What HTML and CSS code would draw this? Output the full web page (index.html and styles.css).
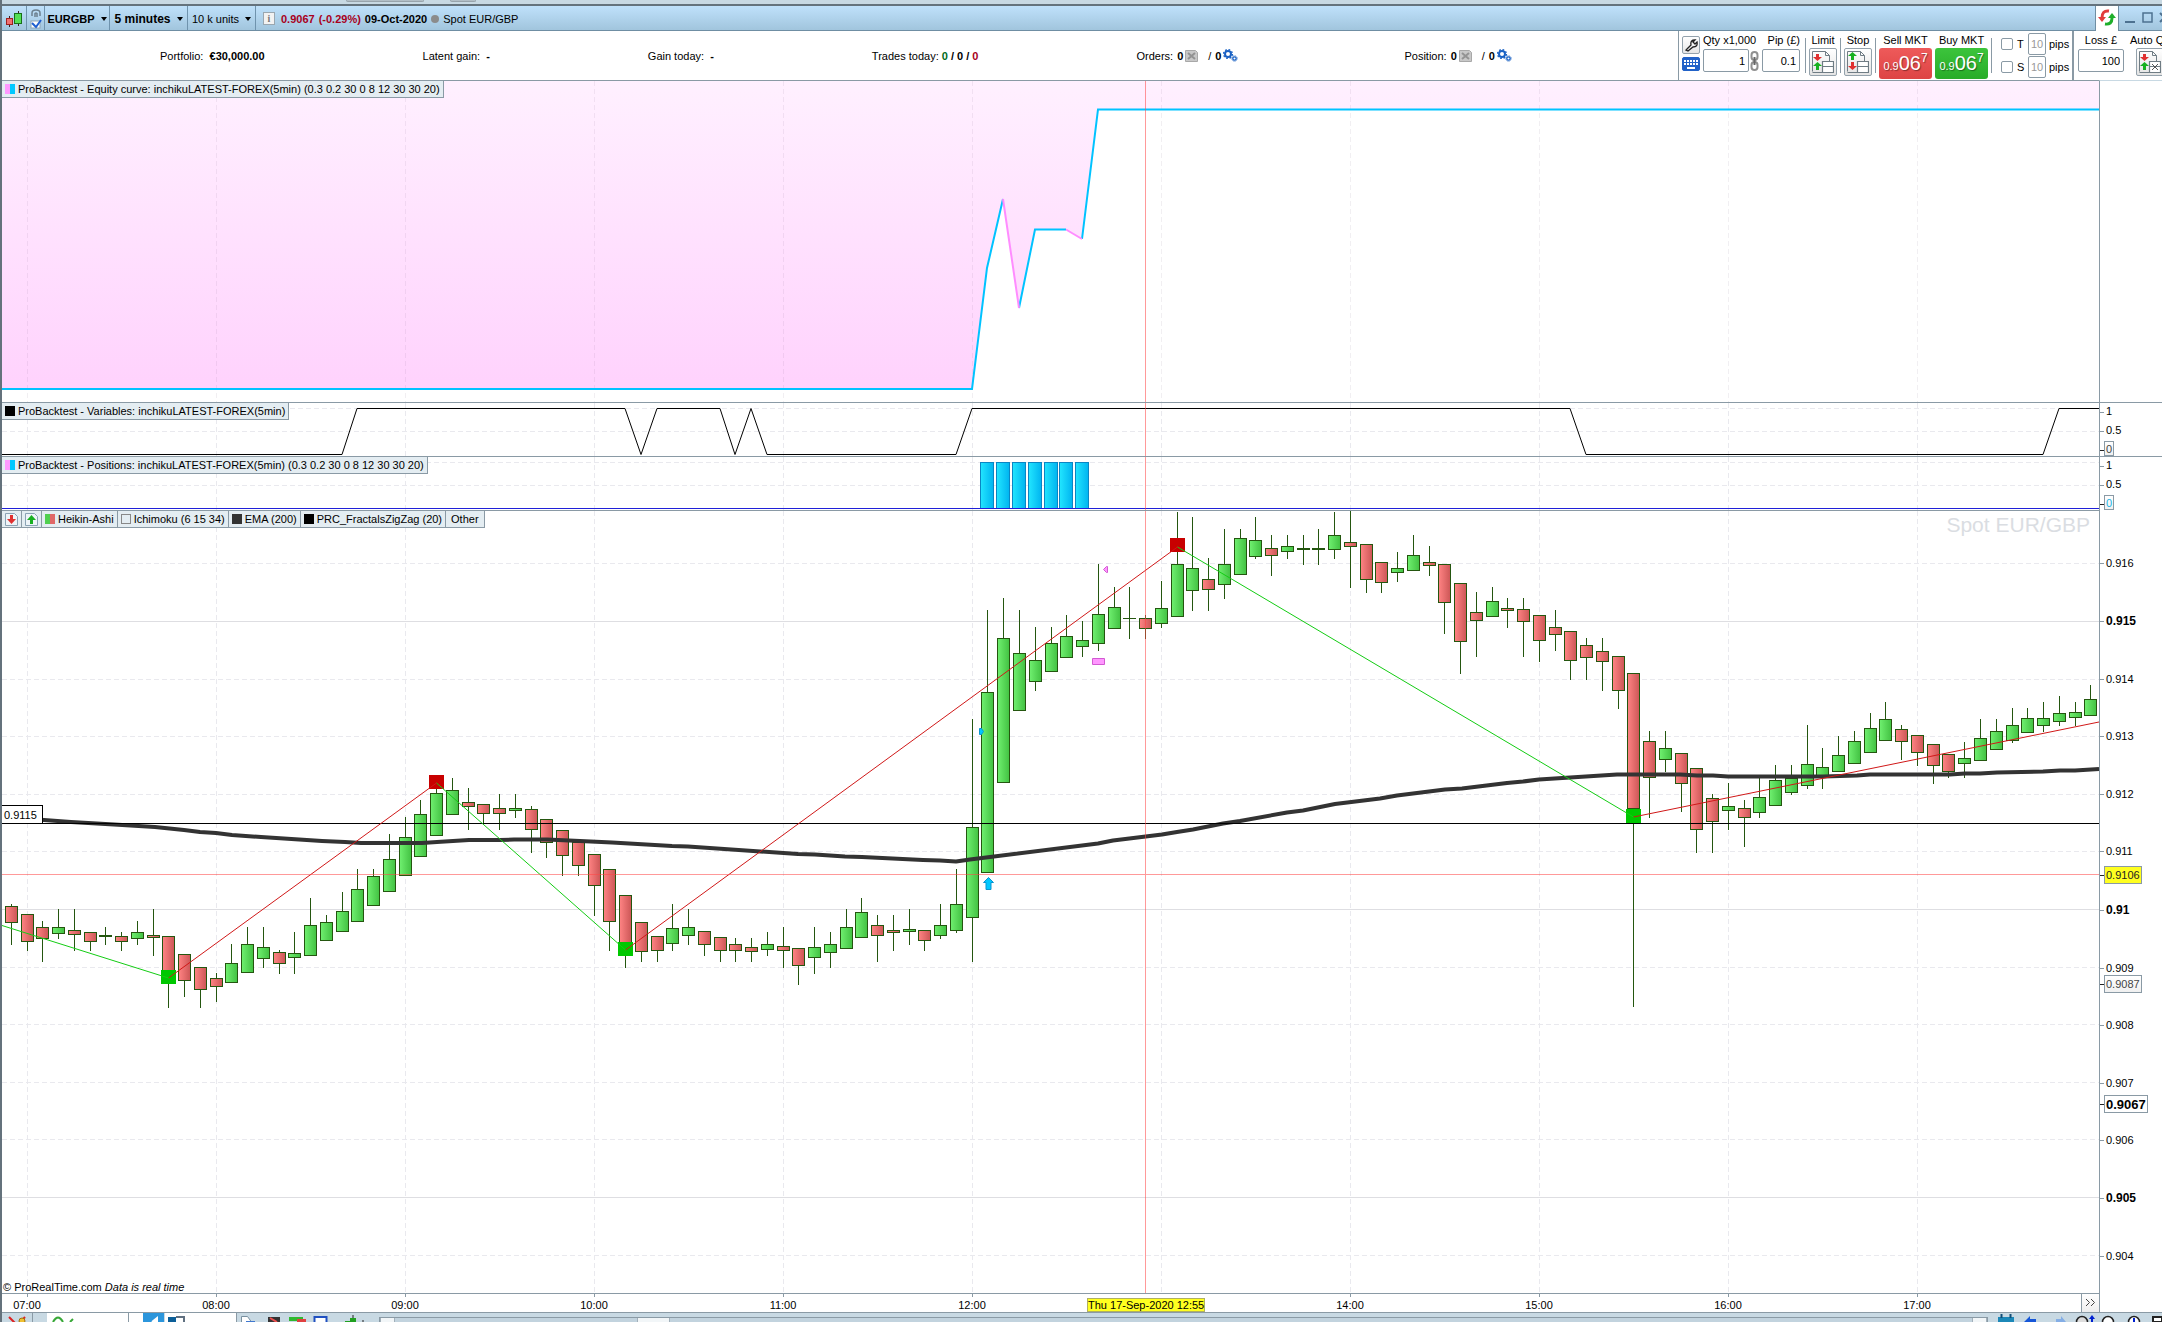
FILE: index.html
```html
<!DOCTYPE html>
<html lang="en">
<head>
<meta charset="utf-8">
<title>EURGBP 5 minutes</title>
<link rel="stylesheet" href="styles.css">
</head>
<body>
<svg class="defs" width="0" height="0" aria-hidden="true">
  <defs>
    <linearGradient id="up"><stop offset="0" stop-color="#70f070"/><stop offset="1" stop-color="#42c142"/></linearGradient>
    <linearGradient id="down"><stop offset="0" stop-color="#ff8484"/><stop offset="1" stop-color="#cc5656"/></linearGradient>
    <linearGradient id="long"><stop offset="0" stop-color="#22e6ff"/><stop offset="1" stop-color="#00b4f0"/></linearGradient>
    <linearGradient id="equityFill" x1="0" y1="81" x2="0" y2="390" gradientUnits="userSpaceOnUse"><stop offset="0" stop-color="#fff0ff"/><stop offset="1" stop-color="#ffd2fd"/></linearGradient>
    <symbol id="gears" viewBox="0 0 15 13">
      <circle cx="5" cy="5" r="3" fill="none" stroke="#1a62c4" stroke-width="2"/>
      <circle cx="5" cy="5" r="4.4" fill="none" stroke="#1a62c4" stroke-width="1.4" stroke-dasharray="1.7 1.75"/>
      <circle cx="11.500" cy="9.500" r="1.700" fill="none" stroke="#1a62c4" stroke-width="1.300"/>
      <circle cx="11.500" cy="9.500" r="2.700" fill="none" stroke="#1a62c4" stroke-dasharray="1 1.100"/>
    </symbol>
    <symbol id="cancel" viewBox="0 0 13 12">
      <path d="M.5.5h10l2 2v9H.5z" fill="#c8c8c8" stroke="#a8a8a8"/>
      <path d="M3 3l7 6M10 3L3 9" stroke="#939393" stroke-width="2"/>
    </symbol>
    <symbol id="sheet" viewBox="0 0 22 22">
      <path d="M.5 20.500V.500h13l4 4v6M.500 21.500h10M13.500.500v4h4" fill="none" stroke="#6f7c84"/>
      <path d="M10.500 10.500h11v5h-11zM10.500 15.500h11v6h-11z" fill="#fff" stroke="#6f7c84" stroke-width="1.200"/>
    </symbol>
  </defs>
</svg>
<div class="window">
  <div class="desktop-edge"><i class="tab wide"></i><i class="tab"></i></div>

  <header class="titlebar">
    <button class="cell candle-btn" aria-label="Chart type"><svg width="16" height="18"><path d="M3.500 6v11M12.500 1v15" stroke="#3a2020"/><rect x=".5" y="8.500" width="6" height="6" fill="#f07070" stroke="#a02020"/><rect x="8.500" y="3.500" width="7" height="10" fill="#55e055" stroke="#187018"/></svg></button>
    <button class="cell link-btn" aria-label="Link list"><svg width="12" height="20"><path d="M2 7V4q0-3 4-3t4 3v3M5 8V4.500q1-1 2 0V8" fill="none" stroke="#6c7f8d" stroke-width="1.500"/><rect x="1" y="12" width="9" height="7" fill="#fff" stroke="#8fa5b5"/><path d="M2 14l4 4 5-7" fill="none" stroke="#1f5fd0" stroke-width="2"/></svg></button>
    <button class="cell symbol">EURGBP<i class="caret"></i></button>
    <button class="cell period">5 minutes<i class="caret"></i></button>
    <button class="cell units">10 k units<i class="caret"></i></button>
    <div class="quote"><span class="info">i</span><b class="loss">0.9067</b><b class="loss">(-0.29%)</b><b>09-Oct-2020</b><i class="dot"></i><span>Spot EUR/GBP</span></div>
    <div class="win-buttons">
      <button class="sync" aria-label="Refresh"><svg width="18" height="18"><path d="M11 2Q4 1 4 9" fill="none" stroke="#e23c3c" stroke-width="3"/><path d="M0 8h8l-4 5z" fill="#e23c3c"/><path d="M7 15q7 1 7-6" fill="none" stroke="#1eae2a" stroke-width="3"/><path d="M10 9h8l-4-5z" fill="#1eae2a"/></svg></button>
      <button aria-label="Minimise"><svg width="11" height="12"><path d="M0 10h10" stroke="#4d7190" stroke-width="2"/></svg></button>
      <button aria-label="Maximise"><svg width="11" height="12"><rect x="1" y="1" width="9" height="9" fill="none" stroke="#4d7190" stroke-width="1.500"/></svg></button>
      <button aria-label="Close"><svg width="11" height="12"><path d="M1 1l9 9M10 1l-9 9" stroke="#4d7190" stroke-width="2"/></svg></button>
    </div>
  </header>

  <section class="account">
    <div class="stats">
      <span>Portfolio: &nbsp;<b>€30,000.00</b></span>
      <span>Latent gain: &nbsp;<b>-</b></span>
      <span>Gain today: &nbsp;<b>-</b></span>
      <span>Trades today: <b class="win">0</b> <b>/ 0 /</b> <b class="loss">0</b></span>
      <span class="orders">Orders: <b>0</b> <svg width="13" height="12"><use href="#cancel"/></svg> <span class="slash">/</span> <b>0</b><svg width="15" height="13"><use href="#gears"/></svg></span>
      <span class="orders">Position: <b>0</b> <svg width="13" height="12"><use href="#cancel"/></svg> <span class="slash">/</span> <b>0</b><svg width="15" height="13"><use href="#gears"/></svg></span>
    </div>
    <form class="ticket">
      <div class="tools">
        <button type="button" class="tool" aria-label="Settings"><svg width="14" height="14"><path d="M2 12l5-5M7 7q-1-5 4-5L9 4l2 2 2-2q1 5-4 5l-5 4-2-1z" fill="none" stroke="#222" stroke-width="1.300"/></svg></button>
        <button type="button" class="tool keys" aria-label="Keyboard"><svg width="16" height="12"><path d="M1 3h14M1 6h14" stroke="#fff" stroke-width="2" stroke-dasharray="2 1"/><path d="M4 10h8" stroke="#fff" stroke-width="2"/></svg></button>
      </div>
      <label class="field qty">Qty x1,000<input value="1"></label>
      <svg class="chain" width="9" height="20"><rect x="1.500" y="1" width="6" height="8" rx="3" fill="none" stroke="#909090" stroke-width="2"/><rect x="1.500" y="11" width="6" height="8" rx="3" fill="none" stroke="#909090" stroke-width="2"/><path d="M4.500 6v8" stroke="#666" stroke-width="2"/></svg>
      <label class="field pip">Pip (£)<input value="0.1"></label>
      <i class="sep"></i>
      <div class="order"><span>Limit</span><button type="button" class="order-btn" aria-label="Limit order"><svg width="22" height="22"><use href="#sheet"/><path d="M4 3h3v3h3l-4.500 4L1 6h3z" fill="#e03030"/><path d="M4 19h3v-4h3l-4.500-4L1 15h3z" fill="#18b020"/></svg></button></div>
      <i class="sep"></i>
      <div class="order"><span>Stop</span><button type="button" class="order-btn" aria-label="Stop order"><svg width="22" height="22"><use href="#sheet"/><path d="M4 9h3V5h3L5.500 1 1 5h3z" fill="#18b020"/><path d="M4 11h3v4h3l-4.500 4L1 15h3z" fill="#e03030"/></svg></button></div>
      <i class="sep"></i>
      <div class="order"><span>Sell MKT</span><button type="button" class="market sell"><small>0.9</small>06<sup>7</sup></button></div>
      <div class="order"><span>Buy MKT</span><button type="button" class="market buy"><small>0.9</small>06<sup>7</sup></button></div>
      <i class="sep"></i>
      <div class="legs">
        <div><label><input type="checkbox">T</label><input class="pips" value="10" aria-label="Target pips">pips</div>
        <div><label><input type="checkbox">S</label><input class="pips" value="10" aria-label="Stop pips">pips</div>
      </div>
    </form>
    <div class="autoqty">
      <label class="field loss-field">Loss £<input value="100"></label>
      <div class="order auto"><span>Auto Q</span><button type="button" class="order-btn" aria-label="Automatic quantity"><svg width="22" height="22"><use href="#sheet"/><path d="M4 3h3v3h3l-4.500 4L1 6h3z" fill="#e03030"/><path d="M4 19h3v-4h3l-4.500-4L1 15h3z" fill="#18b020"/><path d="M13 13l6 6M19 13l-6 6" stroke="#555"/></svg></button></div>
    </div>
  </section>

  <section class="panel equity">
    <div class="plot">
      <svg class="chart" id="equity" viewBox="2 81 2097 321" preserveAspectRatio="none">
        <path fill="url(#equityFill)" d="M2 81V389H972L987 268 1003 199 1019 308 1035 229H1066L1082 239 1098 109H2099V81z"/>
        <g class="hours"></g>
        <path class="gain-line" d="M2 389H972L987 268 1003 199M1019 308L1035 229.500H1066M1082 239L1098 109.500H2099"/>
        <path class="loss-line" d="M1003 199L1019 308M1066 229.500L1082 239"/>
        <path class="cross" d="M1145.500 81V402"/>
      </svg>
      <div class="legend"><span><i class="swatch duo"></i>ProBacktest - Equity curve: inchikuLATEST-FOREX(5min) (0.3 0.2 30 0 8 12 30 30 20)</span></div>
    </div>
    <div class="axis"></div>
  </section>

  <section class="panel small">
    <div class="plot">
      <svg class="chart" id="variables" viewBox="2 403 2097 53" preserveAspectRatio="none">
        <g class="hours"></g>
        <path class="dash" d="M2 408.500H2099M2 431.500H2099"/>
        <path class="var-line" d="M2 454.500H342L357 408.500H625L641 454.500 657 408.500H720L735 454.500 751 408.500 767 454.500H956L972 408.500H1570L1586 454.500H2043L2059 408.500H2099"/>
        <path class="cross" d="M1145.500 403V456"/>
      </svg>
      <div class="legend"><span><i class="swatch black"></i>ProBacktest - Variables: inchikuLATEST-FOREX(5min)</span></div>
    </div>
    <div class="axis steps"><span>1</span><span>0.5</span><span class="tag">0</span></div>
  </section>

  <section class="panel small">
    <div class="plot">
      <svg class="chart" id="positions" viewBox="2 457 2097 53" preserveAspectRatio="none">
        <g class="hours"></g>
        <path class="dash" d="M2 462.500H2099M2 485.500H2099"/>
        <g id="bars"></g>
        <path class="zero" d="M2 508.500H2099"/>
        <path class="cross" d="M1145.500 457V510"/>
      </svg>
      <div class="legend"><span><i class="swatch duo"></i>ProBacktest - Positions: inchikuLATEST-FOREX(5min) (0.3 0.2 30 0 8 12 30 30 20)</span></div>
    </div>
    <div class="axis steps"><span>1</span><span>0.5</span><span class="tag blue">0</span></div>
  </section>

  <section class="panel price">
    <div class="plot">
      <svg class="chart" id="price" viewBox="2 511 2097 782" preserveAspectRatio="none">
        <g class="hours"></g>
        <g id="levels"></g>
        <g id="candles"></g>
        <polyline class="ema" points="2,817 44,820 71,822 114,824.500 155,827 184,830 200,832 216,833 232,835 261,837 322,841 345,842 361,843 422,843 437,842 453,841 469,840 500,840 514,839.500 547,839.500 580,841 612,842.500 672,846 688,846.500 798,854 815,854.500 845,856.500 862,857 923,860 940,860.500 956,861.500 970,859.500 1098,843.500 1113,840.500 1162,834.500 1177,832 1193,829.500 1223,823.500 1240,821 1287,812.500 1303,810.500 1335,804 1380,798.500 1397,795.500 1445,789.500 1462,788.500 1507,783 1523,781.500 1539,779.500 1617,774.500 1680,774.500 1697,775.500 1713,775.500 1728,776.500 1823,776.500 1857,775.500 1870,774.500 1950,774.500 1965,773.500 1980,773.500 1997,772.500 2043,771.500 2060,770.500 2075,770.500 2099,769"/>
        <path class="level" d="M2 823.500H2099"/>
        <path class="mark-low" d="M161 970h15v14h-15zM618 942h15v14h-15zM1626 809h15v14h-15z"/>
        <path class="mark-high" d="M429 775h15v14h-15zM1170 538h15v14h-15z"/>
        <path class="zig-up" d="M168.500 978L436.500 783M625.500 950L1177.500 547M1633.500 817L2099 722"/>
        <path class="zig-down" d="M2 925.500L168.500 978M436.500 783L625.500 950M1177.500 547L1633.500 817"/>
        <path class="buy-arrow" d="M988.500 877.500l5 5h-2.500v7h-5v-7h-2.500z"/>
        <path class="buy-arrow" d="M979.500 728.500v6h2l2-3-2-3z"/>
        <path class="sell-mark" d="M1107.500 566.500v6h-1l-3-3 3-3zM1092.500 658.500h12v6h-12z"/>
        <path class="cross" d="M2 874.500H2099M1145.500 511V1293"/>
      </svg>
      <div class="legend">
        <button class="sheet-btn" aria-label="Sell"><svg width="13" height="13"><path d="M.5.5h9l3 3v9H.5z" fill="#eef4f8" stroke="#8ba3b5"/><path d="M6.500 2v4" stroke="#e03030" stroke-width="3"/><path d="M2 6h9l-4.500 5z" fill="#e03030"/></svg></button>
        <button class="sheet-btn" aria-label="Buy"><svg width="13" height="13"><path d="M.5.5h9l3 3v9H.5z" fill="#eef4f8" stroke="#8ba3b5"/><path d="M6.500 7v4" stroke="#18b020" stroke-width="3"/><path d="M2 7h9L6.500 2z" fill="#18b020"/></svg></button>
        <span><i class="swatch heikin"></i>Heikin-Ashi</span>
        <span><i class="swatch hollow"></i>Ichimoku (6 15 34)</span>
        <span><i class="swatch dark"></i>EMA (200)</span>
        <span><i class="swatch black"></i>PRC_FractalsZigZag (20)</span>
        <span class="other">Other</span>
      </div>
      <span class="watermark">Spot EUR/GBP</span>
      <span class="level-label">0.9115</span>
      <span class="copyright">© ProRealTime.com <em>Data is real time</em></span>
    </div>
    <div class="axis" id="prices"></div>
  </section>

  <section class="panel timeline">
    <div class="plot" id="times"><button class="more" aria-label="Scroll to latest"><svg width="11" height="9"><path d="M1 1l3.500 3.500L1 8M6 1l3.500 3.500L6 8" fill="none" stroke="#444"/></svg></button></div>
    <div class="axis"></div>
  </section>

  <footer class="toolbar">
    <svg class="icons-left" width="245" height="9"><path d="M7 4l10 10M14 14l9-10" stroke="#d22" stroke-width="2"/><circle cx="20" cy="8" r="3" fill="#f0c030" stroke="#a07010"/><path d="M30.500 0v9" stroke="#8a9aa5"/><path d="M45 0h96v9H45zM163 0h71v9H163z" fill="#fff"/><path d="M126.500 0v9M234.500 0v9" stroke="#8a9aa5"/><path d="M51 9q5-9 10 0M68 9l3-3" fill="none" stroke="#38a838" stroke-width="2"/><path d="M141 0h21v9h-21z" fill="#2c96dc"/><path d="M150 9l5-4v4" stroke="#fff" stroke-width="2" fill="#fff"/><path d="M166 9V4h8v5" fill="#0c5f98"/><path d="M174 4h8v5" fill="none" stroke="#607080" stroke-width="2"/></svg>
    <svg class="icons-mid" width="124" height="9"><path d="M.500 9V3.500h6l4 5.500" fill="#fff" stroke="#7890a0"/><path d="M5 8h9v1H5z" fill="#4078d0"/><path d="M27 4h12v5H27z" fill="#333"/><path d="M29 5l7 4" stroke="#f05050" stroke-width="2"/><path d="M48 4h14v4H48z" fill="#30b830"/><path d="M56 6h9v3h-9z" fill="#e04040"/><path d="M73.500 9V4h12v5" fill="#fff" stroke="#2050c0" stroke-width="2"/><path d="M109 5h6v4h-6zM104 8h5v1h-5z" fill="#20a020"/><path d="M112 2v3M121 8h2" stroke="#222"/></svg>
    <div class="scroll"><i class="end"></i><i class="thumb"></i><i class="end"></i></div>
    <svg class="icons-right" width="164" height="9"><path d="M0 4h16v5H0z" fill="#1c88b8"/><path d="M3.500 1v4M12.500 1v4" stroke="#124f78" stroke-width="2"/><path d="M26 9l6-6v3h6v3z" fill="#1556d8"/><path d="M68 9l-5-6v3h-5v3z" fill="#84aee6"/><circle cx="84" cy="9" r="5.500" fill="#ddd" stroke="#222" stroke-width="1.500"/><path d="M91 6l3-4 3 4h-2v3h-2V6z" fill="#0020d0"/><circle cx="110" cy="9" r="5.500" fill="#fff" stroke="#222" stroke-width="1.500"/><circle cx="136" cy="9" r="5.500" fill="#fff" stroke="#222" stroke-width="1.500"/><path d="M136 5v4" stroke="#0020d0" stroke-width="2"/><path d="M155 4h9v5h-9z" fill="#fff" stroke="#222" stroke-width="2"/></svg>
  </footer>
</div>
<script src="chart.js"></script>
</body>
</html>
```
FILE: styles.css
```css
* { box-sizing: border-box; }
body { margin: 0; font: 11px/14px "Liberation Sans", Arial, sans-serif; color: #000; background: #fff; }
button, input { font: inherit; color: inherit; margin: 0; padding: 0; border: 0; background: none; }
.defs { position: absolute; }
i { display: inline-block; }
svg { flex: none; }

.window { display: flex; flex-direction: column; height: 100vh; min-height: 640px; border-left: 2px solid #64727c; overflow: hidden; }
.desktop-edge { flex: none; display: flex; gap: 26px; height: 6px; padding-left: 344px; background: #c8d9e3; border-bottom: 2px solid #65737d; }
.tab { width: 26px; height: 2px; background: #b2bec6; border: 1px solid #98a4ac; border-top: 0; border-radius: 0 0 3px 3px; }
.tab.wide { width: 78px; }

.titlebar { flex: none; display: flex; height: 25px; background: linear-gradient(#bfe1fb, #a1c5dd); border-bottom: 1px solid #6f8ea3; }
.cell { display: flex; align-items: center; justify-content: center; border-right: 1px solid #6f93ad; padding-top: 1px; white-space: nowrap; }
.candle-btn { width: 25px; }
.link-btn { width: 18px; }
.symbol, .period, .units { gap: 6px; }
.symbol { width: 65px; font-weight: bold; }
.period { width: 78px; font-weight: bold; font-size: 12px; }
.units { width: 68px; }
.caret { border: 3px solid transparent; border-top: 4px solid #000; border-bottom: 0; }
.quote { display: flex; align-items: center; gap: 4px; padding: 1px 0 0 7px; white-space: nowrap; }
.info { width: 12px; height: 13px; margin-right: 2px; background: #f2f2f2; border: 1px solid #9aa7b0; color: #777; font: bold 10px/11px "Liberation Serif", serif; text-align: center; }
.loss { color: #a8001c; }
.win { color: #006a20; }
.dot { width: 8px; height: 8px; border-radius: 50%; background: #8b8b8b; }
.win-buttons { display: flex; align-items: center; gap: 6px; margin-left: auto; margin-right: -8px; }
.win-buttons button { display: flex; }
.win-buttons .sync { width: 24px; height: 25px; align-items: center; justify-content: center; background: #fff; border: 1px solid #6f8ea3; border-width: 0 1px; }

.account { flex: none; display: flex; height: 49px; background: #fff; }
.stats { flex: 1; display: flex; justify-content: space-evenly; align-items: center; white-space: nowrap; }
.orders { display: flex; align-items: center; gap: 4px; padding-right: 8px; }
.orders .slash { margin-left: 6px; }
.orders b + svg { margin-left: -2px; }
.ticket { display: flex; align-items: flex-start; gap: 3px; width: 396px; padding: 2px 0 0 3px; border-left: 1px solid #8a9aa5; border-right: 2px solid #8a9aa5; white-space: nowrap; }
.tools { display: flex; flex-direction: column; gap: 3px; padding-top: 3px; }
.tool { display: flex; align-items: center; justify-content: center; width: 18px; height: 18px; border: 1px solid #94a2ac; border-radius: 2px; background: linear-gradient(#fff, #e6e6e6); }
.tool.keys { height: 14px; background: #2262c8; border-color: #2262c8; }
.field { display: flex; flex-direction: column; gap: 2px; }
.field input { height: 23px; padding-right: 3px; border: 1px solid #8a9aa5; border-radius: 2px; background: #fff; text-align: right; }
.qty { width: 46px; }
.pip { width: 38px; margin: 0 2px; text-align: right; }
.chain { margin: 18px -2px 0; }
.sep { width: 1px; height: 35px; margin-top: 5px; background: #8a9aa5; }
.order { display: flex; flex-direction: column; align-items: center; gap: 1px; }
.order-btn { display: flex; align-items: center; justify-content: center; width: 28px; height: 28px; border: 1px solid #94a2ac; border-radius: 2px; background: linear-gradient(#fff, #e4e4e4); }
.market { width: 53px; height: 31px; border-radius: 3px; color: #fff; font-size: 20px; line-height: 31px; text-shadow: 1px 1px 1px rgba(0, 0, 0, .4); white-space: nowrap; }
.market small { font-size: 11px; }
.market sup { font-size: 12px; line-height: 1px; }
.sell { background: linear-gradient(#ee5a5a, #dd4444); }
.buy { background: linear-gradient(#3cc43c, #28ac28); }
.legs { display: flex; flex-direction: column; gap: 1px; padding-left: 6px; }
.legs div { display: flex; align-items: center; gap: 3px; }
.legs label { display: flex; align-items: center; gap: 4px; width: 24px; }
.legs input[type="checkbox"] { appearance: none; width: 12px; height: 12px; border: 1px solid #8a9aa5; border-radius: 2px; }
.pips { width: 18px; height: 22px; border: 1px solid #8a9aa5; border-radius: 2px; color: #999; text-align: center; }
.autoqty { display: flex; align-items: flex-start; gap: 6px; flex: none; width: 88px; padding: 2px 0 0 4px; overflow: hidden; white-space: nowrap; }
.loss-field { flex: none; width: 46px; text-align: center; }
.auto { flex: none; width: 34px; align-items: flex-start; }
.auto .order-btn { margin-left: 6px; }

.panel { flex: none; display: flex; }
.plot { position: relative; flex: 1; min-width: 0; border-top: 1px solid #8a9aa5; }
.axis { position: relative; flex: none; width: 63px; border-left: 1px solid #8a9aa5; border-top: 1px solid #8a9aa5; }
.equity { flex: 322 1 0; min-height: 0; }
.equity .axis { border-top-color: #c8d9e3; }
.small { height: 54px; }
.price { flex: 783 1 0; min-height: 0; }
.timeline { height: 19px; }
.timeline .axis, .price .axis { border-top: 0; }
.chart { position: absolute; width: 100%; height: 100%; }
.legend { position: absolute; top: 0; left: 0; display: flex; height: 17px; line-height: 16px; background: #e4edf2; border-bottom: 1px solid #8a9aa5; white-space: nowrap; }
.legend span, .legend button { display: flex; align-items: center; gap: 3px; padding: 0 3px; border-right: 1px solid #8a9aa5; }
.legend .other { padding: 0 5px; }
.swatch { width: 10px; height: 10px; }
.duo { background: linear-gradient(90deg, #ff99ff 50%, #00c8ff 50%); }
.heikin { background: linear-gradient(90deg, #50d050 50%, #e06868 50%); }
.black { background: #000; }
.dark { background: #333; }
.hollow { border: 1px solid #888; }

.dash, .hours { fill: none; stroke: #e9e9ee; stroke-dasharray: 5 3; shape-rendering: crispEdges; }
.equity .hours { stroke: #64506e; stroke-opacity: .09; }
.solid { stroke: #dedee2; shape-rendering: crispEdges; }
.gain-line, .loss-line { fill: none; stroke: #00c3ff; stroke-width: 2; }
.loss-line { stroke: #ff8cff; }
.var-line { fill: none; stroke: #000; }
.zero { stroke: #2020d8; shape-rendering: crispEdges; }
.cross { fill: none; stroke: #ff4646; stroke-opacity: .55; shape-rendering: crispEdges; }
.bar { fill: url(#long); stroke: #0a86c4; shape-rendering: crispEdges; }
.up, .down, .wick { stroke: #24560f; shape-rendering: crispEdges; }
.up { fill: url(#up); }
.down { fill: url(#down); }
.ema { fill: none; stroke: #333; stroke-width: 4; stroke-linejoin: round; }
.level { stroke: #000; shape-rendering: crispEdges; }
.mark-low { fill: #00c800; }
.mark-high { fill: #c80000; }
.zig-up, .zig-down { fill: none; stroke: #d01818; }
.zig-down { stroke: #14cc14; }
.buy-arrow { fill: #00c8ff; stroke: #0a96d2; }
.sell-mark { fill: #ff96ff; stroke: #d25ad2; }

.watermark { position: absolute; top: 2px; right: 9px; font-size: 21px; line-height: 24px; color: #dadde2; }
.level-label { position: absolute; left: 0; bottom: 60%; width: 41px; height: 19px; padding-left: 2px; border: 1px solid #000; border-left: 0; background: #fff; line-height: 18px; }
.copyright { position: absolute; left: 1px; bottom: 0; line-height: 12px; }

.axis span { position: absolute; left: 4px; height: 18px; margin-top: -9px; padding: 0 2px; line-height: 18px; }
.axis span::before { content: ""; position: absolute; left: -4px; top: 9px; width: 4px; height: 1px; background: #8a9aa5; }
.axis .major { font-weight: bold; font-size: 12px; }
.axis .tag { padding: 0 1px; border: 1px solid #8a9aa5; background: linear-gradient(#fff, #f0f0f0); line-height: 17px; color: #444; }
.axis .tag::before { left: -5px; top: 8px; background: #222; }
.axis .cursor { background: #ffff20; color: #222; }
.axis .last { font-weight: bold; font-size: 13px; color: #000; background: #fff; }
.axis.steps { display: flex; flex-direction: column; justify-content: space-between; align-items: flex-start; padding-left: 4px; }
.axis.steps span { position: relative; left: 0; margin: 0; height: 16px; line-height: 16px; }
.axis.steps .tag { height: 15px; line-height: 14px; }
.steps .blue { color: #18b4e6; }

.hour { position: absolute; top: 4px; width: 40px; margin-left: -20px; text-align: center; }
.hour::before { content: ""; position: absolute; top: -4px; left: 20px; width: 1px; height: 3px; background: #8a9aa5; }
.now { position: absolute; top: 4px; width: 118px; margin-left: -59px; height: 14px; background: #ffff20; border: 1px solid #b0b060; line-height: 13px; text-align: center; white-space: nowrap; }
.more { position: absolute; right: 0; top: 0; width: 18px; height: 18px; border-left: 1px solid #8a9aa5; background: linear-gradient(#fff, #eee); }

.toolbar { flex: none; display: flex; height: 10px; border-top: 1px solid #8a9aa5; background: #c8d9e3; overflow: hidden; }
.icons-left { margin-right: -6px; }
.scroll { flex: 1; display: flex; margin: 4px 10px 0 14px; height: 8px; background: #c2d3de; border: 1px solid #8a9aa5; }
.end, .thumb { width: 15px; background: #f2f6f8; border: 1px solid #a2b0ba; border-width: 0 1px; }
.thumb { width: 33px; margin-left: auto; margin-right: 81%; }
```
FILE: chart.js
```js
const NS = 'http://www.w3.org/2000/svg';
const LEFT = 2, WIDTH = 2097, TOP = 511, HEIGHT = 782;

/* candle centre for the k-th bar counted from 12:00 */
const barX = k => Math.floor(972.24 + 15.754 * k);

function add(parent, tag, attrs) {
  const el = document.createElementNS(NS, tag);
  for (const name in attrs) el.setAttribute(name, attrs[name]);
  parent.appendChild(el);
}

/* Each row: high, body top, body bottom, low (thirds of a unit below base), direction */
const blocks = [
  { base: 780, first: -61, rows: `372 378 429 495 r|402 402 486 513 r|423 441 477 546 r|387 441 462 477 g|387 450 465 513 r|456 456 486 513 r|441 465 471 495 g|456 468 486 513 r|423 456 477 495 g|387 465 474 528 r|468 468 597 684 r|522 522 603 651 r|561 561 630 684 r|579 594 621 666 r|492 549 609 609 g|441 492 579 579 g|441 501 537 564 g|510 516 552 582 r|456 519 534 582 g|354 435 528 528 g|405 426 483 483 g|336 393 456 456 g|267 327 426 426 g|267 288 378 378 g|162 237 336 336 g|111 171 288 288 g|60 102 231 231 g|20 39 168 168 g|-6 30 105 105 g|24 66 81 150 r|72 72 102 132 r|42 84 102 150 r|42 84 93 114 g|78 87 150 219 r|117 117 189 234 r|150 150 228 288 r|186 186 258 288 r|222 222 318 408 r|267 267 426 513 r|345 345 528 564 r|426 426 516 546 r|468 468 513 546 r|372 444 492 513 g|387 441 468 495 g|453 453 495 528 r|471 471 513 546 r|474 492 513 546 r|474 501 516 546 r|456 492 510 528 g|441 498 513 564 r|504 504 558 615 r|441 501 534 582 g|456 492 519 564 g|387 441 507 507 g|354 396 474 474 g|405 435 468 546 r|405 450 459 513 r|387 447 456 495 g|450 450 483 513 r|372 435 468 477 g|267 372 453 459 g|-183 141 414 546 g` },
  { base: 440, first: 1, rows: `510 756 1299 1299 g|474 594 1029 1029 g|510 639 813 813 g|561 660 726 753 g|561 609 696 696 g|525 588 654 654 g|543 600 621 651 g|372 522 612 633 g|441 501 567 567 g|441 534 537 597 g|525 534 567 597 r|423 504 552 564 g|216 372 531 531 g|231 384 453 513 g|354 417 450 513 r|267 372 435 477 g|267 294 405 405 g|231 300 351 357 g|285 324 348 408 r|285 318 336 357 g|285 324 330 375 g|267 324 330 375 g|216 285 330 357 g` },
  { base: 500, first: 24, rows: `33 126 141 264 r|132 132 240 279 r|186 186 249 279 r|156 204 219 246 g|105 165 213 213 g|138 186 198 228 r|192 192 309 402 r|249 249 426 522 r|276 336 363 471 r|261 303 351 351 g|294 324 333 384 r|294 327 366 471 r|345 345 423 486 r|330 381 405 453 r|393 393 483 540 r|414 435 474 540 r|414 453 486 573 r|468 468 573 627 r|519 519 927 1521 r|693 723 834 954 r|693 744 780 816 g|759 759 852 936 r|804 804 990 1059 r|882 894 966 1059 r` },
  { base: 640, first: 48, rows: `429 498 513 570 g|480 504 534 621 r|414 471 519 534 g|375 420 498 498 g|375 414 459 465 g|255 372 438 447 g|324 381 408 447 g|288 345 396 396 g|273 303 372 372 g|219 264 339 339 g|186 237 303 303 g|255 267 306 360 r|285 285 339 378 r|312 312 378 432 r|342 342 396 414 r|306 354 372 414 g|237 294 363 363 g|237 273 330 330 g|204 255 303 309 g|204 234 279 279 g|186 234 258 276 g|168 219 246 258 g|186 216 234 258 g|135 177 228 228 g` }
];

const candles = document.getElementById('candles');
for (const { base, first, rows } of blocks) {
  rows.split('|').forEach((row, i) => {
    const cells = row.split(' ');
    const [high, top, bottom, low] = cells.slice(0, 4).map(v => Math.round(base + v / 3));
    const x = barX(first + i);
    add(candles, 'path', { class: 'wick', d: `M${x + 0.5} ${high}V${low}` });
    add(candles, 'rect', { class: cells[4] === 'g' ? 'up' : 'down', x: x - 5.5, y: top + 0.5, width: 12, height: Math.max(bottom - top - 1, 0.01) });
  });
}

/* Hour grid lines in every panel and their labels on the time line */
const times = document.getElementById('times');
const hours = [7, 8, 9, 10, 11, 12, 13, 14, 15, 16, 17];
document.querySelectorAll('.hours').forEach(group => {
  const [, y, , h] = group.parentNode.getAttribute('viewBox').split(' ').map(Number);
  hours.forEach(hour => add(group, 'path', { d: `M${barX((hour - 12) * 12) + 0.5} ${y}V${y + h}` }));
});
function timeLabel(cls, text, x) {
  const el = document.createElement('span');
  el.className = cls;
  el.textContent = text;
  el.style.left = `${(x - LEFT) / WIDTH * 100}%`;
  times.appendChild(el);
}
hours.filter(hour => hour !== 13).forEach(hour => timeLabel('hour', `${String(hour).padStart(2, '0')}:00`, barX((hour - 12) * 12)));
timeLabel('now', 'Thu 17-Sep-2020 12:55', 1146);

/* Price levels */
const prices = document.getElementById('prices');
const levels = document.getElementById('levels');
const priceY = p => Math.round(909 + (0.91 - p) * 57600);
function priceLabel(cls, text, y) {
  const el = document.createElement('span');
  el.className = cls;
  el.textContent = text;
  el.style.top = `${(y - TOP + 1) / HEIGHT * 100}%`;
  prices.appendChild(el);
}
for (let n = 904; n <= 916; n++) {
  const major = n % 5 === 0, y = priceY(n / 1000);
  add(levels, 'path', { class: major ? 'solid' : 'dash', d: `M2 ${y + 0.5}H2099` });
  priceLabel(major ? 'major' : '', String(n / 1000), y);
}
priceLabel('tag cursor', '0.9106', 875);
priceLabel('tag', '0.9087', 983);
priceLabel('tag last', '0.9067', 1103);

/* Open position bars */
const bars = document.getElementById('bars');
for (let k = 1; k <= 7; k++) add(bars, 'rect', { class: 'bar', x: barX(k) - 6.5, y: 462.5, width: 13, height: 46 });
```
